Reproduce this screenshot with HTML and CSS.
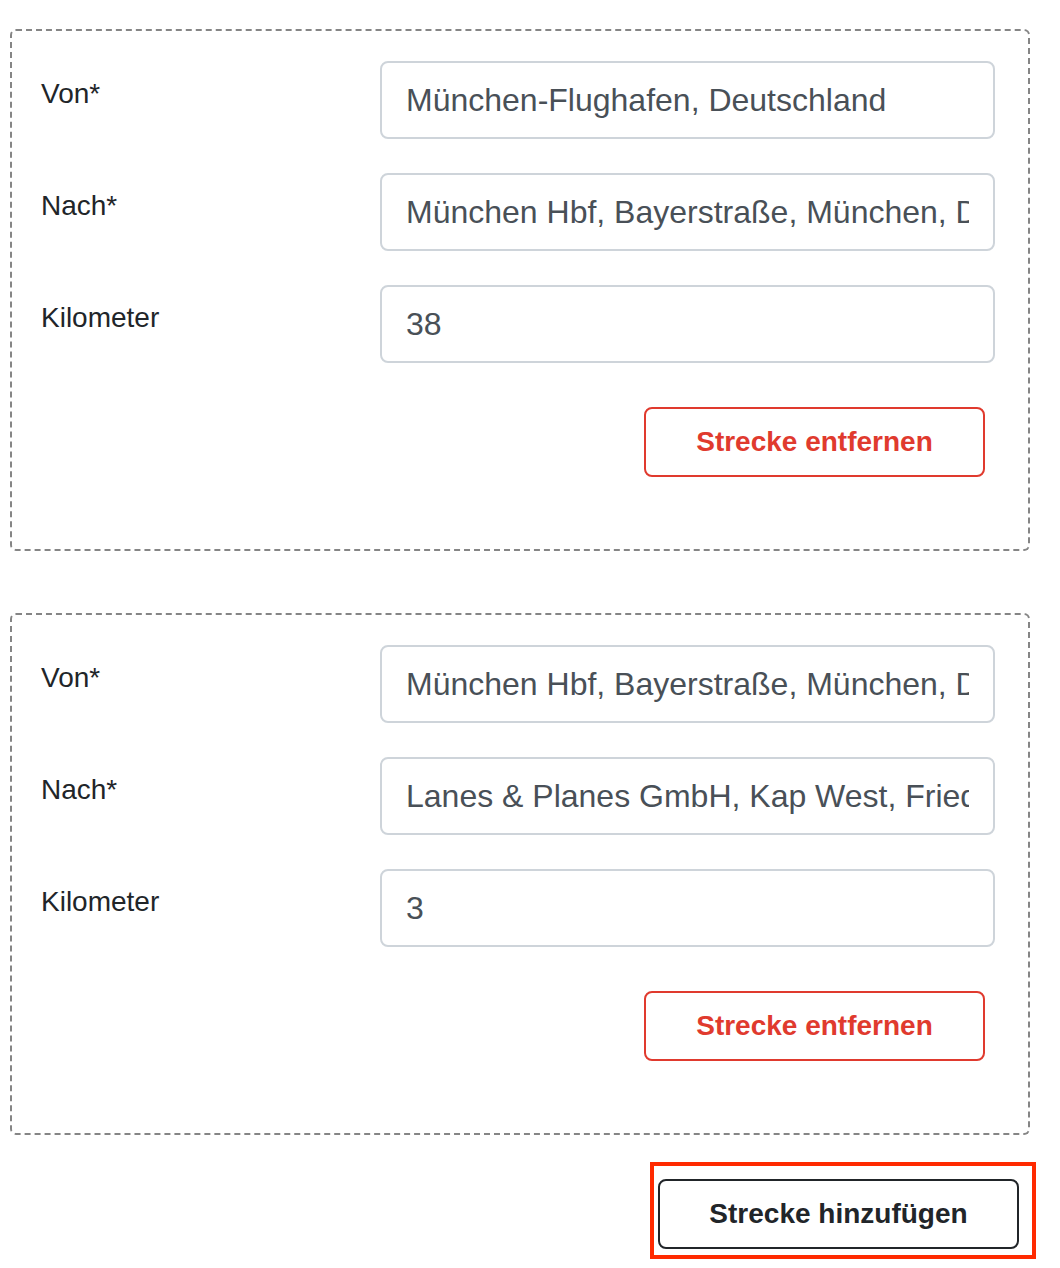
FILE: index.html
```html
<!DOCTYPE html>
<html>
<head>
    <title>Strecken</title>
    <link rel="stylesheet" href="styles.css">
</head>
<body>
    <div class="page">
        <div class="route">
            <div class="row">
                <label class="label" for="from1">Von*</label>
                <input class="field" id="from1" type="text" value="München-Flughafen, Deutschland">
            </div>
            <div class="row">
                <label class="label" for="to1">Nach*</label>
                <input class="field" id="to1" type="text" value="München Hbf, Bayerstraße, München, Deutschland">
            </div>
            <div class="row">
                <label class="label" for="km1">Kilometer</label>
                <input class="field" id="km1" type="text" value="38">
            </div>
            <div class="actions">
                <button class="btn btn-remove" type="button">Strecke entfernen</button>
            </div>
        </div>

        <div class="route route-last">
            <div class="row">
                <label class="label" for="from2">Von*</label>
                <input class="field" id="from2" type="text" value="München Hbf, Bayerstraße, München, Deutschland">
            </div>
            <div class="row">
                <label class="label" for="to2">Nach*</label>
                <input class="field" id="to2" type="text" value="Lanes &amp; Planes GmbH, Kap West, Friedenheimer Brücke, München">
            </div>
            <div class="row">
                <label class="label" for="km2">Kilometer</label>
                <input class="field" id="km2" type="text" value="3">
            </div>
            <div class="actions">
                <button class="btn btn-remove" type="button">Strecke entfernen</button>
            </div>
        </div>

        <div class="footer">
            <div class="highlight">
                <button class="btn btn-add" type="button">Strecke hinzufügen</button>
            </div>
        </div>
    </div>
</body>
</html>
```

FILE: styles.css
```css
body {
    margin: 0;
    background-color: white;
    color: #212529;
    font-family: "Liberation Sans", Arial, sans-serif;
}
.page {
    width: 1020px;
    padding: 29px 0 0 10px;
}
.route {
    border: 2px dashed #858585;
    border-radius: 6px;
    padding: 30px 33px 72px 29px;
    margin-bottom: 62px;
    display: flex;
    flex-direction: column;
    gap: 34px;
}
.route-last {
    margin-bottom: 27px;
}
.row {
    display: flex;
}
.label {
    width: 339px;
    flex: none;
    font-size: 28px;
    line-height: 40px;
    padding-top: 13px;
}
.field {
    flex: 1;
    height: 78px;
    box-sizing: border-box;
    border: 2px solid #ced4da;
    border-radius: 8px;
    padding: 0 24px;
    font-family: "Liberation Sans", Arial, sans-serif;
    font-size: 32px;
    color: #495057;
    background: white;
    outline: none;
}
.actions {
    display: flex;
    justify-content: flex-end;
    padding-right: 10px;
    margin-top: 10px;
}
.btn {
    height: 70px;
    box-sizing: border-box;
    border-radius: 8px;
    background: white;
    font-family: "Liberation Sans", Arial, sans-serif;
    font-size: 28px;
    font-weight: bold;
    cursor: pointer;
}
.btn-remove {
    width: 341px;
    border: 2px solid #e03a2e;
    color: #e03a2e;
}
.footer {
    display: flex;
    justify-content: flex-end;
    margin-right: -6px;
}
.highlight {
    border: 4px solid #ff2a00;
    padding: 13px 13px 6px 4px;
}
.btn-add {
    width: 361px;
    border: 2px solid #212529;
    color: #212529;
    display: block;
}
```
